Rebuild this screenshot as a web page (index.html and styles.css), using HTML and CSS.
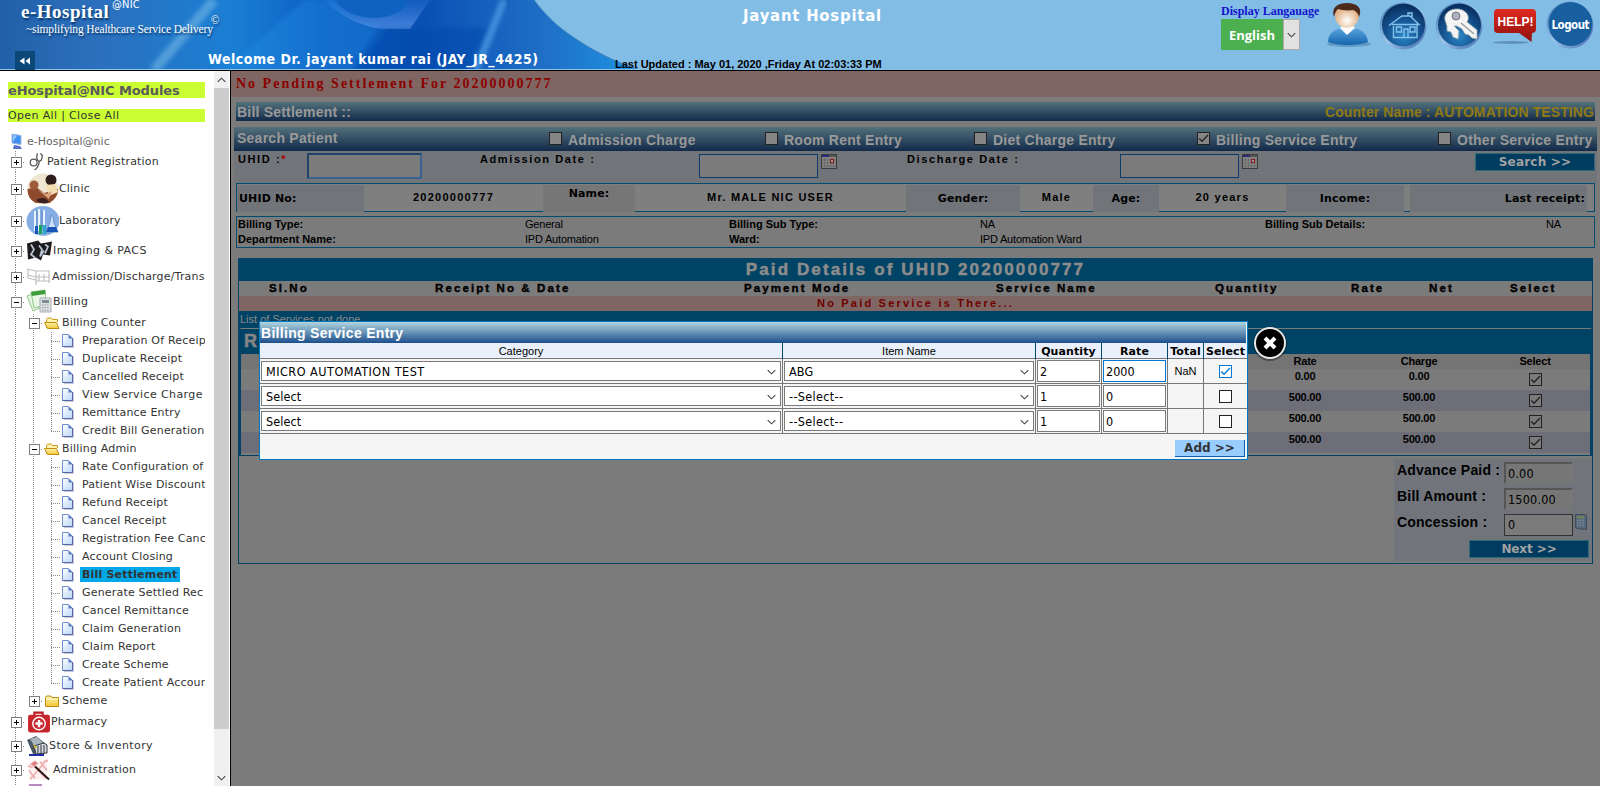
FILE: index.html
```
<!DOCTYPE html>
<html lang="en">
<head>
<meta charset="utf-8">
<title>Bill Settlement</title>
<link rel="stylesheet" href="styles.css">
</head>
<body>
<svg class="defs" width="0" height="0">
  <defs>
    <linearGradient id="gPage" x1="0" y1="0" x2="1" y2="1"><stop offset="0" stop-color="#fff"/><stop offset="1" stop-color="#b9d6f8"/></linearGradient>
    <linearGradient id="gFold" x1="0" y1="0" x2="0" y2="1"><stop offset="0" stop-color="#fff3a8"/><stop offset="1" stop-color="#f0c63a"/></linearGradient>
    <radialGradient id="gBtn" cx=".5" cy=".75" r=".7"><stop offset="0" stop-color="#2b86c4"/><stop offset=".6" stop-color="#14508c"/><stop offset="1" stop-color="#0a2f60"/></radialGradient>
    <linearGradient id="gRim" x1="0" y1="0" x2="1" y2="1"><stop offset="0" stop-color="#3a78b4"/><stop offset=".5" stop-color="#9cc4ea"/><stop offset="1" stop-color="#3d62a8"/></linearGradient>
    <symbol id="page" viewBox="0 0 14 14"><path d="M3 2h7l3 3v9H3z" fill="#b5b8c4" opacity=".7"/><path d="M1.500 .5h6l4 4v8h-10z" fill="url(#gPage)" stroke="#6f8fd0"/><path d="M7.500 .5v4h4z" fill="#5a7cc8"/><path d="M11.500 4v8.500h-10" fill="none" stroke="#5a64ac"/></symbol>
    <symbol id="fopen" viewBox="0 0 16 14"><path d="M2.500 12V3.500l1-1.500h4l1 1.500h5V6" fill="#fff3b0" stroke="#c89a20"/><path d="M.5 6.500h12l2.500 6H3.500z" fill="url(#gFold)" stroke="#c08c10"/></symbol>
    <symbol id="fshut" viewBox="0 0 16 14"><path d="M1.500 12.500v-9l1-1.500h4.500l1 1.500h6.500v9z" fill="url(#gFold)" stroke="#c08c10"/><path d="M2 5h12" stroke="#fffbe0"/></symbol>
    <symbol id="cal" viewBox="0 0 16 15"><rect x=".5" y=".5" width="15" height="14" fill="#858585" stroke="#3c3c3c"/><path d="M1 1h7v2H1z" fill="#28287a"/><path d="M8 1h7v2H8z" fill="#54544c"/><path d="M1 6h14M1 9h14M1 12h14M3.500 4v10M6.500 4v10M9.500 4v10M12.500 4v10" stroke="#666" stroke-width=".7"/><rect x="9.500" y="5.500" width="3" height="3" fill="#999" stroke="#8c1c1c"/></symbol>
    <symbol id="tick" viewBox="0 0 13 13"><path d="M2.200 6.500 5 9.300l6-6.300" fill="none" stroke="currentColor" stroke-width="1.300"/></symbol>
    <symbol id="chev" viewBox="0 0 10 6"><path d="M.8.8 5 5 9.200.8" fill="none" stroke="currentColor" stroke-width="1.200"/></symbol>
  </defs>
</svg>

<header class="top">
  <svg class="sky" viewBox="0 0 640 70">
    <defs>
      <linearGradient id="sk" x1="0" y1="0" x2="1" y2="0"><stop offset="0" stop-color="#2160a8"/><stop offset=".15" stop-color="#2c70bd"/><stop offset=".36" stop-color="#1b7fd4"/><stop offset=".5" stop-color="#0c5fc4"/><stop offset=".66" stop-color="#0a50b4"/><stop offset=".85" stop-color="#1f6fc6"/><stop offset="1" stop-color="#1e93e2"/></linearGradient>
      <linearGradient id="hl" x1="0" y1="0" x2="0" y2="1"><stop offset="0" stop-color="#3d86e0" stop-opacity=".2"/><stop offset="1" stop-color="#5c94e8" stop-opacity=".75"/></linearGradient>
      <filter id="bl"><feGaussianBlur stdDeviation="2"/></filter>
    </defs>
    <path d="M0 0H534C546 16 558 27 573 37 592 50 612 61 640 70H0z" fill="url(#sk)"/>
    <path d="M325 0h105l-20 29h-30q-34-6-55-29z" fill="url(#hl)"/>
    <path d="M305 0h30q16 27 52 29l-30 41H225z" fill="#2597ea" opacity=".3" filter="url(#bl)"/>
    <path d="M336 0q10 17 38 18 27-1 36-18z" fill="#0f62c2"/>
    <path d="M378 28h110l-18 42H352z" fill="#0548ac" opacity=".5" filter="url(#bl)"/>
    <path d="M214 0 154 70" stroke="#6fb6e4" stroke-width="10" opacity=".6" filter="url(#bl)"/>
    <path d="M504 0 476 70" stroke="#5cacec" stroke-width="7" opacity=".6" filter="url(#bl)"/>
    <path d="M534 0C546 16 558 27 573 37 592 50 612 61 640 70" fill="none" stroke="#3d7fb8"/>
    <path d="M0 69.500h640" stroke="#8cc4ec"/>
  </svg>
  <div class="brand">
    <div class="logo"><span class="name">e-Hospital</span><span class="nic">@NIC</span></div>
    <div class="tag">~simplifying Healthcare Service Delivery<span class="copy">©</span></div>
    <div class="welcome"><span class="fold"><svg width="12" height="8" viewBox="0 0 12 8"><path d="M5.500.5v7L.5 4zM11 .5v7L6.500 4z" fill="#fff"/></svg></span><b>Welcome Dr. jayant kumar rai (JAY_JR_4425)</b></div>
  </div>
  <div class="mid"><h1>Jayant Hospital</h1><p>Last Updated : May 01, 2020 ,Friday At 02:03:33 PM</p></div>
  <div class="tools">
    <div class="lang"><span>Display Langauage</span><div class="pick"><b>English</b><i><svg width="9" height="6"><use href="#chev"/></svg></i></div></div>
    <svg class="t1" width="46" height="48" viewBox="0 0 46 48">
      <defs><linearGradient id="bd" x1="0" y1="0" x2="0" y2="1"><stop offset="0" stop-color="#5aa4de"/><stop offset="1" stop-color="#1565ae"/></linearGradient><radialGradient id="fc" cx=".5" cy=".7"><stop offset="0" stop-color="#fff"/><stop offset="1" stop-color="#e2b285"/></radialGradient></defs>
      <ellipse cx="24" cy="44" rx="22" ry="3" fill="#4c82ac" opacity=".6"/>
      <path d="M3 42c0-9 7-13 14-14h11c8 1 14 5 15 14-9 4-31 4-40 0z" fill="url(#bd)"/>
      <path d="M15 28l7 7 8-7-3-4h-8z" fill="#fff"/>
      <path d="M10 15c0-15 24-15 24 0 0 17-24 17-24 0z" fill="url(#fc)"/>
      <path d="M9 17C6 8 12 3 22 3s16 5 12 14c-1-4-3-6-6-7-6 1-12 0-15-1-2 2-3 4-4 8z" fill="#4b2a1c"/>
    </svg>
    <svg class="t2" width="50" height="48" viewBox="0 0 50 48">
      <circle cx="25" cy="24" r="23.500" fill="url(#gRim)"/><circle cx="25.500" cy="23" r="21.500" fill="url(#gBtn)"/>
      <path d="M11 23.500 24 14h8l9 8.500H14M15.500 24v11.500H39V23M30 14v-3h4v5M18.500 25h5v5h-5zM32 25h5v5h-5zM26 35v-8h4v8" fill="none" stroke="#85c3ee" stroke-width="1.400"/>
    </svg>
    <svg class="t3" width="50" height="48" viewBox="0 0 50 48">
      <circle cx="25" cy="24" r="23.500" fill="url(#gRim)"/><circle cx="25.500" cy="23" r="21.500" fill="url(#gBtn)"/>
      <path d="M11 18C9 9 22 4 30 9c5 3 5 8 3 11l10 8v9l-5-1-3-3-4-1-3-5-5-3-3 0 5 5-1 8-5-2-2-5-4-1 0-5z" fill="#f4f4f4" stroke="#9aa" stroke-width=".8"/><circle cx="22" cy="14" r="4" fill="#aab3bd" stroke="#777"/><path d="M27 21l13 11" stroke="#999" stroke-width="1.300"/>
    </svg>
    <svg class="t4" width="46" height="36" viewBox="0 0 46 36">
      <defs><linearGradient id="rd" x1="0" y1="0" x2="0" y2="1"><stop offset="0" stop-color="#e02a20"/><stop offset="1" stop-color="#8c100c"/></linearGradient></defs>
      <ellipse cx="18" cy="33.500" rx="18" ry="1.500" fill="#5f93bb"/><path d="M5 0h34q4 0 4 4v16q0 4-4 4l-.5 9L26 24H5q-4 0-4-4V4q0-4 4-4z" fill="url(#rd)"/>
      <text x="4.500" y="16.500" class="help" textLength="36">HELP!</text>
    </svg>
    <svg class="t5" width="50" height="48" viewBox="0 0 50 48">
      <circle cx="25" cy="24" r="23.500" fill="url(#gRim)"/><circle cx="25.500" cy="23" r="22" fill="#185f9f"/>
      <text x="6.500" y="28" class="out" textLength="38">Logout</text>
    </svg>
  </div>
</header>

<div class="body">
<aside class="side">
  <div class="tree">
    <h2>eHospital@NIC Modules</h2>
    <p class="all">Open All | Close All</p>
    <div class="r root"><svg width="14" height="17" viewBox="0 0 14 17"><path d="M2 1l9 1.500v9L2 10z" fill="#3f8ef0" stroke="#9fb8e0"/><path d="M3 2l4 .8-4 6z" fill="#8cc4ff"/><path d="M4 12l6 1 2 3H3z" fill="#5770c8"/></svg><span>e-Hospital@nic</span></div>
    <div class="r h20"><i class="v x plus"></i><svg class="ic i22" viewBox="0 0 22 20"><path d="M12 1.500q-2 6 1 8 4 1 4-6l-2-2" fill="none" stroke="#555" stroke-width="1.400"/><path d="M14 10q-1 6-5 9" fill="none" stroke="#444" stroke-width="1.300"/><circle cx="8" cy="11" r="3.600" fill="none" stroke="#555" stroke-width="1.300"/></svg><span>Patient Registration</span></div>
    <div class="r h34"><i class="v x plus"></i><svg class="ic i33" viewBox="0 0 33 32"><circle cx="17" cy="16" r="15.500" fill="#efe6d2"/><path d="M1.500 16a15 15 0 0 0 8 14h14q9-6 8.500-14l-6 2-8 2-8-6z" fill="#8e4a2c"/><circle cx="8" cy="12" r="4.500" fill="#a05a3c"/><circle cx="25" cy="7" r="5.500" fill="#2e1c1c"/><path d="M20 12l9-1 3 8-9 4z" fill="#f2dcb0"/><path d="M12 17l8 4 6-3-3 8z" fill="#d9a27c"/><path d="M10 27q8-5 13 2-6 4-13-2z" fill="#3a2020"/></svg><span>Clinic</span></div>
    <div class="r h30"><i class="v x plus"></i><svg class="ic i33" viewBox="0 0 33 30"><ellipse cx="17" cy="15" rx="16.500" ry="15" fill="#86aee4"/><path d="M9 5v20M13 3v22M18 4v20" stroke="#e8f2ff" stroke-width="2"/><path d="M11 5v18M16 4v18M25 9v10" stroke="#5c88c8"/><path d="M25 10l-1 6-4 10h12l-4-9-1-7z" fill="#cde2f8" stroke="#6b92cc"/><path d="M22 21h8l2 5H20zM9 20h3v8H9z" fill="#1a55b8"/><path d="M13 19h3v9h-3z" fill="#1fa05a"/><path d="M17 19h3v9h-3z" fill="#2aa5c8"/></svg><span>Laboratory</span></div>
    <div class="r h29 wide"><i class="v x plus"></i><svg class="ic i27" viewBox="0 0 27 22"><path d="M1 4l11-3 3 3 11-2-2 14-7-1-2 6-5-3-8 2z" fill="#1c1c1e"/><path d="M5 5l3 5-3 5 4 3M13 6l3 4-2 7 4-6M19 5l3 2-3 7" stroke="#bcc6d4" stroke-width="1.700" fill="none"/></svg><span>Imaging &amp; PACS</span></div>
    <div class="r h24"><i class="v x plus"></i><svg class="ic i26" viewBox="0 0 26 20"><path d="M1 2l9 2h14M2 2v9M10 4v14M23 4v12M2 8l8 2h14M2 11l8 2M13 7v7M18 7v7M10 14h14" fill="none" stroke="#c0c0c0" stroke-width="1.200"/></svg><span>Admission/Discharge/Transfer</span></div>
    <div class="r h25"><i class="v x minus"></i><svg class="ic i27" viewBox="0 0 27 25"><path d="M1 7l8-3 5 15-7 3z" fill="#e8f6e4" stroke="#8cc884"/><path d="M5 3l14-2 1 15-12 3z" fill="#e9f7e6" stroke="#8cc884"/><path d="M5 3l14-2 .5 4L6 7z" fill="#3f9c3c"/><path d="M14 9h11v14H14z" fill="#dfe2e2" stroke="#aab"/><path d="M16 11h7v3h-7z" fill="#7c8e8c"/><path d="M16 16h7M16 18.500h7M16 21h7" stroke="#999" stroke-dasharray="1.500 1"/></svg><span>Billing</span></div>
    <div class="r"><i class="v"></i><i class="v x minus"></i><svg class="fo"><use href="#fopen"/></svg><span>Billing Counter</span></div>
    <div class="r"><i class="v"></i><i class="v"></i><i class="v t"></i><svg class="pg"><use href="#page"/></svg><span>Preparation Of Receipt</span></div>
    <div class="r"><i class="v"></i><i class="v"></i><i class="v t"></i><svg class="pg"><use href="#page"/></svg><span>Duplicate Receipt</span></div>
    <div class="r"><i class="v"></i><i class="v"></i><i class="v t"></i><svg class="pg"><use href="#page"/></svg><span>Cancelled Receipt</span></div>
    <div class="r wide"><i class="v"></i><i class="v"></i><i class="v t"></i><svg class="pg"><use href="#page"/></svg><span>View Service Charge</span></div>
    <div class="r"><i class="v"></i><i class="v"></i><i class="v t"></i><svg class="pg"><use href="#page"/></svg><span>Remittance Entry</span></div>
    <div class="r"><i class="v"></i><i class="v"></i><i class="v t end"></i><svg class="pg"><use href="#page"/></svg><span>Credit Bill Generation</span></div>
    <div class="r"><i class="v"></i><i class="v x minus"></i><svg class="fo"><use href="#fopen"/></svg><span>Billing Admin</span></div>
    <div class="r"><i class="v"></i><i class="v"></i><i class="v t"></i><svg class="pg"><use href="#page"/></svg><span>Rate Configuration of</span></div>
    <div class="r"><i class="v"></i><i class="v"></i><i class="v t"></i><svg class="pg"><use href="#page"/></svg><span>Patient Wise Discount</span></div>
    <div class="r"><i class="v"></i><i class="v"></i><i class="v t"></i><svg class="pg"><use href="#page"/></svg><span>Refund Receipt</span></div>
    <div class="r"><i class="v"></i><i class="v"></i><i class="v t"></i><svg class="pg"><use href="#page"/></svg><span>Cancel Receipt</span></div>
    <div class="r"><i class="v"></i><i class="v"></i><i class="v t"></i><svg class="pg"><use href="#page"/></svg><span>Registration Fee Cancel</span></div>
    <div class="r"><i class="v"></i><i class="v"></i><i class="v t"></i><svg class="pg"><use href="#page"/></svg><span>Account Closing</span></div>
    <div class="r"><i class="v"></i><i class="v"></i><i class="v t"></i><svg class="pg"><use href="#page"/></svg><span class="sel">Bill Settlement</span></div>
    <div class="r"><i class="v"></i><i class="v"></i><i class="v t"></i><svg class="pg"><use href="#page"/></svg><span>Generate Settled Rec</span></div>
    <div class="r"><i class="v"></i><i class="v"></i><i class="v t"></i><svg class="pg"><use href="#page"/></svg><span>Cancel Remittance</span></div>
    <div class="r"><i class="v"></i><i class="v"></i><i class="v t"></i><svg class="pg"><use href="#page"/></svg><span>Claim Generation</span></div>
    <div class="r"><i class="v"></i><i class="v"></i><i class="v t"></i><svg class="pg"><use href="#page"/></svg><span>Claim Report</span></div>
    <div class="r"><i class="v"></i><i class="v"></i><i class="v t"></i><svg class="pg"><use href="#page"/></svg><span>Create Scheme</span></div>
    <div class="r"><i class="v"></i><i class="v"></i><i class="v t end"></i><svg class="pg"><use href="#page"/></svg><span>Create Patient Account</span></div>
    <div class="r"><i class="v"></i><i class="v x plus end"></i><svg class="fo"><use href="#fshut"/></svg><span>Scheme</span></div>
    <div class="r h24"><i class="v x plus"></i><svg class="ic i25" viewBox="0 0 24 22"><path d="M8 5V2h8v3" fill="none" stroke="#b81c24" stroke-width="2"/><rect x="2" y="4" width="21" height="17" rx="2" fill="#c9252c"/><circle cx="12.500" cy="12.500" r="6" fill="none" stroke="#fff" stroke-width="1.400"/><path d="M12.500 9v7M9 12.500h7" stroke="#fff" stroke-width="2.400"/></svg><span>Pharmacy</span></div>
    <div class="r h24 wide"><i class="v x plus"></i><svg class="ic i23" viewBox="0 0 23 22"><path d="M1 5l9-4 11 9-2 8-12 1z" fill="#4b5a66"/><path d="M4 4l7-2 6 6-8 4z" fill="#a9b6bd"/><path d="M8 11l10-3 3 2v8l-11 1z" fill="#d4dce4" stroke="#333"/><path d="M12 11v7M15 10v8M18 10v8" stroke="#333"/><path d="M7 9l4 3-2 2z" fill="#e0c030"/><path d="M3 20h15" stroke="#1b2eaa" stroke-width="2"/></svg><span>Store &amp; Inventory</span></div>
    <div class="r h24"><i class="v x plus"></i><svg class="ic i27" viewBox="0 0 27 23"><path d="M3 3h18v18H3z" fill="#fff0f0"/><path d="M2 7q3 3 6 0l12 13M4 21L17 6q1-4 5-4M3 12l6 8M14 3l7 9" fill="none" stroke="#eeb0b0" stroke-width="1.800"/><path d="M9 8l14 13" stroke="#2c1414" stroke-width="2"/><path d="M4 6l5-4 3 3-3 2z" fill="#d04848" opacity=".65"/></svg><span>Administration</span></div>
    <div class="r"><i class="v x plus"></i><svg class="ic i27" viewBox="0 0 27 18"><path d="M3 2h13v12H3z" fill="#b98cc0"/></svg></div>
  </div>
  <div class="bar"><i><svg width="9" height="6" class="up"><use href="#chev"/></svg></i><b></b><i><svg width="9" height="6"><use href="#chev"/></svg></i></div>
</aside>

<main>
  <div class="alert">No Pending Settlement For 20200000777</div>
  <div class="bar1"><span>Bill Settlement ::</span><span class="gold">Counter Name : AUTOMATION TESTING</span></div>
  <div class="bar2">
    <span class="sp">Search Patient</span>
    <label><i class="cb"></i>Admission Charge</label>
    <label><i class="cb"></i>Room Rent Entry</label>
    <label><i class="cb"></i>Diet Charge Entry</label>
    <label><i class="cb"><svg width="13" height="13"><use href="#tick"/></svg></i>Billing Service Entry</label>
    <label><i class="cb"></i>Other Service Entry</label>
  </div>
  <div class="find">
    <span>UHID :<em>*</em></span><i class="in in1"></i>
    <span>Admission Date :</span><i class="in"></i><svg width="16" height="15"><use href="#cal"/></svg>
    <span>Discharge Date :</span><i class="in"></i><svg width="16" height="15"><use href="#cal"/></svg>
    <b class="btn">Search &gt;&gt;</b>
  </div>
  <div class="info">
    <b class="s l">UHID No:</b><b class="a">20200000777</b><b class="s2 up4">Name:</b><b class="a">Mr. MALE NIC USER</b><b class="s">Gender:</b><b class="a">Male</b><b class="s">Age:</b><b class="a">20 years</b><b class="s">Income:</b><i></i><b class="s rt">Last receipt:</b><i></i>
  </div>
  <div class="bill">
    <b>Billing Type:</b><span>General</span><b>Billing Sub Type:</b><span>NA</span><b>Billing Sub Details:</b><span>NA</span>
    <b>Department Name:</b><span>IPD Automation</span><b>Ward:</b><span>IPD Automation Ward</span>
  </div>
  <section class="paid">
    <h3>Paid Details of UHID 20200000777</h3>
    <div class="ph"><b>Sl.No</b><b>Receipt No &amp; Date</b><b>Payment Mode</b><b>Service Name</b><b>Quantity</b><b>Rate</b><b>Net</b><b>Select</b></div>
    <div class="none">No Paid Service is There...</div>
    <div class="lst">List of Services not done</div>
    <div class="inner">
      <h4>R</h4>
      <div class="sr hd"><b>Rate</b><b>Charge</b><b>Select</b></div>
      <div class="sr"><b>0.00</b><b>0.00</b><i class="cb c2"><svg width="13" height="13"><use href="#tick"/></svg></i></div>
      <div class="sr lav"><b>500.00</b><b>500.00</b><i class="cb c2"><svg width="13" height="13"><use href="#tick"/></svg></i></div>
      <div class="sr"><b>500.00</b><b>500.00</b><i class="cb c2"><svg width="13" height="13"><use href="#tick"/></svg></i></div>
      <div class="sr lav"><b>500.00</b><b>500.00</b><i class="cb c2"><svg width="13" height="13"><use href="#tick"/></svg></i></div>
    </div>
    <div class="sum">
      <div><b>Advance Paid :</b><span class="val">0.00</span></div>
      <div><b>Bill Amount :</b><span class="val">1500.00</span></div>
      <div><b>Concession :</b><span class="val ed">0</span><svg width="12" height="16" viewBox="0 0 12 16"><path d="M.5.5h9l2 1v14l-9-1-2-1z" fill="#56687c" stroke="#3e4a58"/><path d="M2 2h7v2.500H2z" fill="#71805c"/><path d="M2 6.500h7M2 9h7M2 11.500h7" stroke="#7a8898" stroke-width="1.300" stroke-dasharray="1.600 1"/></svg></div>
      <b class="btn next">Next &gt;&gt;</b>
    </div>
  </section>
</main>
</div>

<div class="modal">
  <h5>Billing Service Entry</h5>
  <div class="g gh"><span>Category</span><span>Item Name</span><b>Quantity</b><b>Rate</b><b>Total</b><b>Select</b></div>
  <div class="g"><div><span class="dd up">MICRO AUTOMATION TEST<svg><use href="#chev"/></svg></span></div><div><span class="dd">ABG<svg><use href="#chev"/></svg></span></div><div><span class="tx">2</span></div><div><span class="tx foc">2000</span></div><div class="nan">NaN</div><div class="ck"><i class="cb c3 on"><svg width="13" height="13"><use href="#tick"/></svg></i></div></div>
  <div class="g"><div><span class="dd">Select<svg><use href="#chev"/></svg></span></div><div><span class="dd dash">--Select--<svg><use href="#chev"/></svg></span></div><div><span class="tx">1</span></div><div><span class="tx">0</span></div><div></div><div class="ck"><i class="cb c3"></i></div></div>
  <div class="g"><div><span class="dd">Select<svg><use href="#chev"/></svg></span></div><div><span class="dd dash">--Select--<svg><use href="#chev"/></svg></span></div><div><span class="tx">1</span></div><div><span class="tx">0</span></div><div></div><div class="ck"><i class="cb c3"></i></div></div>
  <div class="foot"><b>Add &gt;&gt;</b></div>
  <svg class="close" width="38" height="38" viewBox="0 0 38 38"><circle cx="19" cy="20" r="17" fill="#000" opacity=".35"/><circle cx="19" cy="19" r="15" fill="#000" stroke="#e8e8e8" stroke-width="2"/><path d="M14 14l10 10M24 14 14 24" stroke="#fff" stroke-width="4"/></svg>
</div>
</body>
</html>
```
FILE: styles.css
```
* { box-sizing: border-box; }
body { margin: 0; width: 1600px; height: 786px; overflow: hidden; position: relative; font-family: "Liberation Sans", Arial, sans-serif; font-size: 12px; color: #000; background: #fff; }
h1, h2, h3, h4, h5, p { margin: 0; }
i, em { font-style: normal; }
svg { display: block; flex: none; }
.defs { position: absolute; }

.top { position: relative; display: flex; height: 71px; background: #82bde6; border-bottom: 1px solid #000; }
.sky { position: absolute; left: 0; top: 0; width: 640px; height: 70px; }
.brand { position: relative; width: 615px; color: #fff; white-space: nowrap; }
.logo { display: flex; height: 22px; padding-left: 21px; font-family: "Liberation Serif", serif; }
.name { font-size: 19px; font-weight: bold; line-height: 23px; letter-spacing: .5px; width: 91px; text-shadow: 1px 2px 2px #0a3468; }
.nic { font: 11px/10px "DejaVu Sans Condensed", "DejaVu Sans", sans-serif; letter-spacing: .2px; }
.tag { height: 29px; padding-left: 26px; font: 11.5px/14px "Liberation Serif", serif; letter-spacing: -.14px; text-shadow: 1px 2px 2px #0a3468; }
.copy { position: relative; top: -9px; left: -2px; }
.welcome { display: flex; height: 19px; padding-left: 15px; }
.fold { width: 20px; height: 19px; margin-right: 173px; background: #0b4878; display: flex; align-items: center; justify-content: center; }
.welcome b { font: bold 14px/17px "DejaVu Sans Condensed", "DejaVu Sans", sans-serif; letter-spacing: .5px; }
.mid { width: 606px; position: relative; }
.mid h1 { padding-left: 128px; font: bold 16.5px/32px "DejaVu Sans Condensed", "DejaVu Sans", sans-serif; letter-spacing: .8px; color: #fff; height: 57px; }
.mid p { font: bold 11px/14px "Liberation Sans", sans-serif; }
.tools { display: flex; }
.lang { width: 105px; padding-top: 4px; font: bold 12px/15px "Liberation Serif", serif; color: #1414cc; white-space: nowrap; }
.pick { display: flex; width: 79px; height: 31px; }
.pick b { width: 62px; background: #4caf50; color: #fff; font: bold 13px/32px "Open Sans", sans-serif; text-align: center; }
.pick i { width: 17px; background: #e1e1e1; border: 1px solid #b0a8a8; display: flex; align-items: center; justify-content: center; color: #444; }
.t1 { margin-left: -1px; margin-right: 7px; }
.t2 { margin: 2px 6px 0 0; }
.t3 { margin: 2px 9px 0 0; }
.t4 { margin: 9px 6px 0 0; }
.t5 { margin-top: 1px; }
.help { font: bold 12px "Liberation Sans", sans-serif; fill: #fff; }
.out { font: bold 11.5px "DejaVu Sans Condensed", "DejaVu Sans", sans-serif; fill: #fff; }

.body { display: flex; height: 715px; }
.side { display: flex; width: 231px; border-right: 1px solid #000; background: #fff; }
.tree { width: 205px; margin-right: 9px; padding: 11px 0 0 6px; overflow: hidden; height: 715px; font: 11px/18px "DejaVu Sans", Verdana, sans-serif; letter-spacing: .19px; color: #333; white-space: nowrap; }
.tree h2 { margin-left: 2px; height: 16px; background: #cf3; font: bold 13px/17px "DejaVu Sans", sans-serif; letter-spacing: -.1px; color: #5a5a5a; }
.all { margin: 11px 0 10px 2px; height: 13px; background: #cf3; line-height: 14px; letter-spacing: .35px; }
.r { display: flex; align-items: center; height: 18px; }
.r.wide { letter-spacing: .4px; }
.root { height: 19px; padding-left: 4px; color: #666; letter-spacing: 0; }
.root svg { margin-right: 3px; }
.h20 { height: 21px; } .h34 { height: 34px; } .h30 { height: 30px; } .h29 { height: 29px; } .h24 { height: 24px; } .h25 { height: 25px; }
.v { flex: none; position: relative; width: 18px; align-self: stretch; background: repeating-linear-gradient(#888 0 1px, transparent 1px 2px) 9px 0 / 1px 100% no-repeat; }
.v.end { background-size: 1px 50%; }
.t::after, .x::after { content: ""; position: absolute; left: 9px; right: -1px; top: 50%; height: 1px; background: repeating-linear-gradient(90deg, #888 0 1px, transparent 1px 2px); }
.x::before { content: ""; position: absolute; z-index: 1; left: 5px; top: calc(50% - 5px); width: 9px; height: 9px; border: 1px solid #808080; }
.minus::before { background: linear-gradient(#000, #000) 50% 50% / 5px 1px no-repeat #fff; }
.plus::before { background: linear-gradient(#000, #000) 50% 50% / 5px 1px no-repeat, linear-gradient(#000, #000) 50% 50% / 1px 5px no-repeat #fff; }
.ic { margin-left: 2px; height: 100%; }
.i22 { width: 21px; } .i33 { width: 33px; } .i27 { width: 27px; } .i26 { width: 26px; } .i25 { width: 25px; } .i23 { width: 23px; }
.fo { width: 16px; height: 14px; margin: 0 2px 0 2px; }
.pg { width: 14px; height: 14px; margin: 0 6px 0 1px; }
.r .sel { background: #00a8e8; font-weight: bold; line-height: 15px; padding: 0 2px; margin: -1px 0 0 -1px; }
.pg + span { padding-left: 1px; }
.bar { display: flex; flex-direction: column; width: 15px; background: #f0f0f0; }
.bar i { height: 17px; display: flex; align-items: center; justify-content: center; color: #444; }
.bar b { height: 641px; background: #cdcdcd; margin-bottom: auto; }
.bar .up { transform: scaleY(-1); }

main { width: 1369px; background: #7b7b7b; overflow: hidden; }
.alert { height: 26px; padding-left: 5px; background: #806662; color: #8b0000; font: bold 14px/26px "Liberation Serif", serif; letter-spacing: 2px; }
.bar1 { display: flex; justify-content: space-between; margin: 5px 5px 0; height: 19px; padding: 0 1px; background: linear-gradient(#53717b, #122a4a); color: #999; font: bold 14px/20px "Liberation Sans", sans-serif; letter-spacing: .2px; }
.bar1 .gold { color: #8f7a14; letter-spacing: .1px; }
.bar2 { display: grid; grid-template-columns: 312px 216px 209px 223px 241px 1fr; margin: 6px 3px 0; height: 24px; padding-left: 3px; background: linear-gradient(#53717b, #122a4a); color: #999; font: bold 14px/27px "Liberation Sans", sans-serif; letter-spacing: .25px; white-space: nowrap; }
.bar2 .sp { line-height: 22px; }
.bar2 label { display: flex; }
.cb { flex: none; display: block; width: 13px; height: 13px; border: 1px solid #222; background: #858585; color: #222; }
.cb svg { margin: -1px; }
.bar2 .cb { margin: 5px 6px 0 0; }
.find { display: grid; grid-template-columns: 69px 173px 219px 122px 86px 213px 122px 233px 120px; height: 32px; margin: 0 3px; padding: 2px 0 0 4px; background: #717479; font: bold 11px/10px "Liberation Sans", sans-serif; letter-spacing: 1.6px; white-space: nowrap; }
.find em { color: #a00; }
.find span { padding-top: 1px; }
.in { width: 119px; height: 24px; margin-top: 1px; border: 1px solid #0c3a6c; background: #7b7b7b; }
.in1 { width: 115px; height: 26px; margin-top: 0; border: 2px solid #1f4368; border-right-color: #3a6290; border-bottom-color: #3a6290; }
.find svg { margin-top: 1px; }
.btn { display: block; width: 120px; height: 18px; border: 1px solid #2e6a74; background: #003c60; color: #a2a2a2; text-align: center; font: bold 12px/17px "DejaVu Sans", sans-serif; letter-spacing: .2px; }
.info { display: grid; grid-template-columns: 127px 179px 92px 271px 114px 73px 66px 127px 118px 6px 177px 1fr; margin: 0 5px; height: 29px; padding: 1px 0; border: 1px solid #004b70; background: #7f7f7f; font: bold 11px/27px "DejaVu Sans", sans-serif; letter-spacing: .15px; text-align: center; white-space: nowrap; }
.info .s { background: #717479; }
.info .s2 { background: #767676; }
.info .l { text-align: left; padding-left: 2px; }
.info .up4 { line-height: 17px; }
.info .rt { text-align: right; padding-right: 2px; }
.info .a { font: bold 11px/24px "Liberation Sans", sans-serif; letter-spacing: 1.25px; }
.bill { display: grid; grid-template-columns: 287px 204px 251px 285px 281px 1fr; margin: 4px 5px 0; height: 32px; padding-left: 1px; border: 1px solid #004b70; font: 11px/15px "Liberation Sans", sans-serif; white-space: nowrap; }
.bill span { letter-spacing: -.2px; }
.paid { margin: 10px 7px 0; height: 306px; border: 1px solid #004364; border-top: 0; }
.paid h3 { height: 23px; background: #004364; color: #8c8c8c; text-align: center; font: bold 17px/24px "Liberation Sans", sans-serif; letter-spacing: 2.1px; -webkit-text-stroke: .5px #8c8c8c; }
.ph { display: grid; grid-template-columns: 166px 309px 252px 219px 136px 78px 81px 1fr; padding-left: 30px; height: 15px; font: bold 11.5px/14px "Liberation Sans", sans-serif; letter-spacing: 2.1px; white-space: nowrap; -webkit-text-stroke: .4px #000; }
.none { height: 15px; background: #806662; color: #6e0000; text-align: center; font: bold 11px/15px "Liberation Sans", sans-serif; letter-spacing: 2.2px; }
.lst { height: 17px; padding-left: 1px; background: #004364; color: #8a8a8a; font: 11px/17px "Liberation Sans", sans-serif; }
.inner { height: 128px; border: solid #004364; border-width: 1px 2px 1px; border-top-color: #7b7b7b; }
.inner h4 { height: 25px; padding-left: 3px; background: #004364; color: #858585; font: bold 18px/25px "Liberation Sans", sans-serif; -webkit-text-stroke: .5px #858585; }
.sr { display: grid; grid-template-columns: 128px 100px 132px; padding-left: 1000px; height: 21px; font: bold 11px/14px "Liberation Sans", sans-serif; letter-spacing: -.2px; text-align: center; }
.hd { height: 15px; line-height: 15px; background: #747474; }
.sr.lav { background: #6e6e78; }
.c2 { margin: 4px auto 0; background: #7b7b7b; }
.sum { width: 198px; height: 102px; margin: 3px 0 0 auto; padding: 3px 0 0 3px; background: #71757b; font: bold 14px/17px "Liberation Sans", sans-serif; letter-spacing: .2px; }
.sum div { display: flex; height: 26px; }
.sum div b { width: 107px; white-space: nowrap; }
.val { width: 69px; height: 22px; padding-left: 2px; border: 2px solid #555; border-right-color: #777; border-bottom-color: #777; background: #767676; font: 12.5px/20px "DejaVu Sans Condensed", "DejaVu Sans", sans-serif; margin-right: 2px; }
.ed { border: 1px solid #333; padding-left: 3px; background: #7b7b7b; }
.sum .btn { margin-left: 72px; letter-spacing: -.1px; }

.modal { position: absolute; left: 259px; top: 321px; width: 989px; height: 139px; border: 1px solid #0078bf; background: #f5f5f5; }
.modal h5 { height: 21px; padding: 1px 0 0 1px; margin-right: 1px; background: linear-gradient(#b0d5e0, #1d4f8c); color: #fff; font: bold 14px/20px "Liberation Sans", sans-serif; letter-spacing: .3px; }
.g { display: grid; grid-template-columns: 523px 253px 66px 66px 36px 43px; height: 25px; border-bottom: 1px solid #777; }
.g > * { border-right: 1px solid #777; padding: 2px 1px; }
.g > :last-child { border-right: 0; }
.gh { height: 16px; text-align: center; font: 11px/16px "Liberation Sans", sans-serif; background: #e9f0fb; }
.gh > * { padding: 0; border-color: #00486c; }
.gh b { font: bold 11px/17px "DejaVu Sans", sans-serif; letter-spacing: .1px; }
.dd { display: flex; align-items: center; justify-content: space-between; height: 20px; padding: 1px 4px 0; border: 1px solid #7a7a7a; background: #fff; font: 12.5px/18px "DejaVu Sans Condensed", "DejaVu Sans", sans-serif; letter-spacing: .1px; }
.dd.up { letter-spacing: .5px; }
.dd.dash { letter-spacing: .35px; }
.dd svg { width: 9px; height: 6px; color: #444; }
.tx { display: block; height: 22px; margin-top: -1px; border: 1px solid #7a7a7a; padding-left: 2px; background: #fff; font: 12.5px/22px "DejaVu Sans Condensed", "DejaVu Sans", sans-serif; }
.foc { border-color: #0078d7; }
.nan { text-align: center; font: 11px/21px "Liberation Sans", sans-serif; }
.c3 { background: #fff; margin: 4px auto 0; }
.on { border-color: #0078d7; color: #0078d7; }
.foot { display: flex; justify-content: flex-end; padding: 6px 2px 0 0; }
.foot b { width: 70px; height: 17px; background: #99ccff; border: solid #0a5fb8; border-width: 0 1px 1px 0; text-align: center; color: #333; font: bold 12px/17px "DejaVu Sans", sans-serif; }
.close { position: absolute; left: 991px; top: 2px; }
```
